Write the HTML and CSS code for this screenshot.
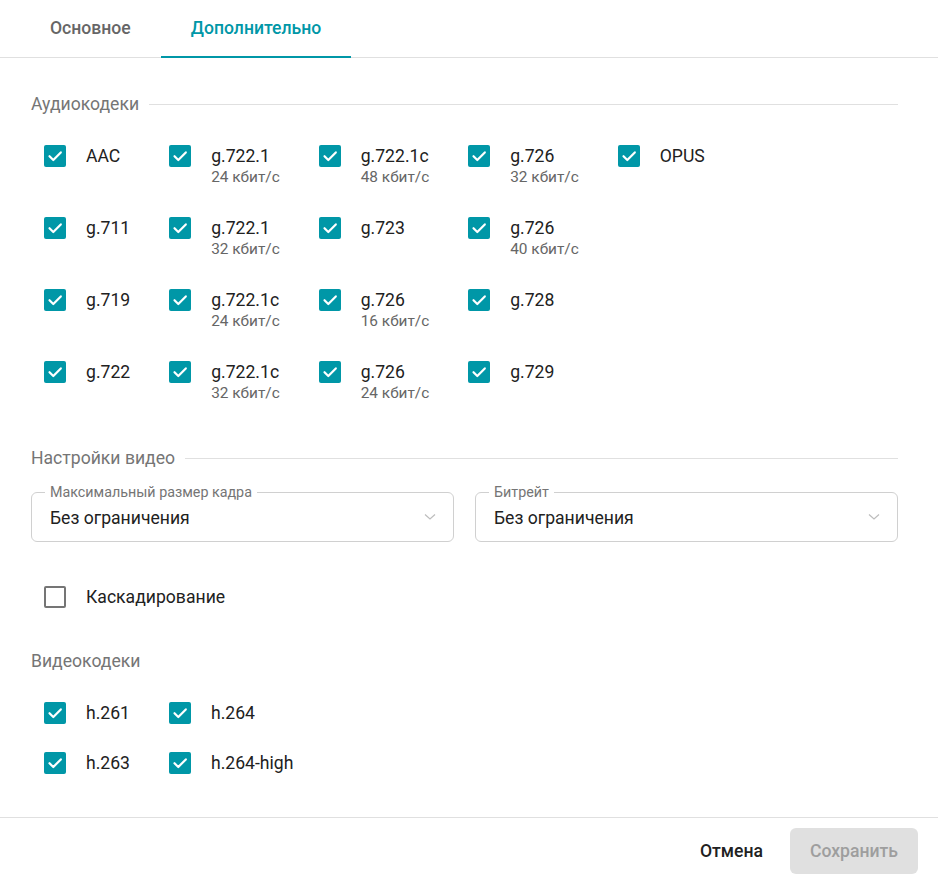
FILE: index.html
```html
<!DOCTYPE html>
<html lang="ru">
<head>
<meta charset="utf-8">
<title>Настройки</title>
<link rel="stylesheet" href="styles.css">
</head>
<body>
<div class="dialog">
  <div class="tabs">
    <div class="tab">Основное</div>
    <div class="tab active">Дополнительно</div>
  </div>

  <div class="content">
    <div class="section-title"><span>Аудиокодеки</span><i class="rule"></i></div>

    <div class="audio-grid">
      <label class="item"><span class="cb on"><svg viewBox="0 0 22 22"><path d="M5.5 11.2 L9.3 15 L16.8 7.4"/></svg></span><span class="txt"><span class="name">AAC</span></span></label>
      <label class="item"><span class="cb on"><svg viewBox="0 0 22 22"><path d="M5.5 11.2 L9.3 15 L16.8 7.4"/></svg></span><span class="txt"><span class="name">g.711</span></span></label>
      <label class="item"><span class="cb on"><svg viewBox="0 0 22 22"><path d="M5.5 11.2 L9.3 15 L16.8 7.4"/></svg></span><span class="txt"><span class="name">g.719</span></span></label>
      <label class="item"><span class="cb on"><svg viewBox="0 0 22 22"><path d="M5.5 11.2 L9.3 15 L16.8 7.4"/></svg></span><span class="txt"><span class="name">g.722</span></span></label>

      <label class="item"><span class="cb on"><svg viewBox="0 0 22 22"><path d="M5.5 11.2 L9.3 15 L16.8 7.4"/></svg></span><span class="txt"><span class="name">g.722.1</span><span class="sub">24 кбит/с</span></span></label>
      <label class="item"><span class="cb on"><svg viewBox="0 0 22 22"><path d="M5.5 11.2 L9.3 15 L16.8 7.4"/></svg></span><span class="txt"><span class="name">g.722.1</span><span class="sub">32 кбит/с</span></span></label>
      <label class="item"><span class="cb on"><svg viewBox="0 0 22 22"><path d="M5.5 11.2 L9.3 15 L16.8 7.4"/></svg></span><span class="txt"><span class="name">g.722.1c</span><span class="sub">24 кбит/с</span></span></label>
      <label class="item"><span class="cb on"><svg viewBox="0 0 22 22"><path d="M5.5 11.2 L9.3 15 L16.8 7.4"/></svg></span><span class="txt"><span class="name">g.722.1c</span><span class="sub">32 кбит/с</span></span></label>

      <label class="item"><span class="cb on"><svg viewBox="0 0 22 22"><path d="M5.5 11.2 L9.3 15 L16.8 7.4"/></svg></span><span class="txt"><span class="name">g.722.1c</span><span class="sub">48 кбит/с</span></span></label>
      <label class="item"><span class="cb on"><svg viewBox="0 0 22 22"><path d="M5.5 11.2 L9.3 15 L16.8 7.4"/></svg></span><span class="txt"><span class="name">g.723</span></span></label>
      <label class="item"><span class="cb on"><svg viewBox="0 0 22 22"><path d="M5.5 11.2 L9.3 15 L16.8 7.4"/></svg></span><span class="txt"><span class="name">g.726</span><span class="sub">16 кбит/с</span></span></label>
      <label class="item"><span class="cb on"><svg viewBox="0 0 22 22"><path d="M5.5 11.2 L9.3 15 L16.8 7.4"/></svg></span><span class="txt"><span class="name">g.726</span><span class="sub">24 кбит/с</span></span></label>

      <label class="item"><span class="cb on"><svg viewBox="0 0 22 22"><path d="M5.5 11.2 L9.3 15 L16.8 7.4"/></svg></span><span class="txt"><span class="name">g.726</span><span class="sub">32 кбит/с</span></span></label>
      <label class="item"><span class="cb on"><svg viewBox="0 0 22 22"><path d="M5.5 11.2 L9.3 15 L16.8 7.4"/></svg></span><span class="txt"><span class="name">g.726</span><span class="sub">40 кбит/с</span></span></label>
      <label class="item"><span class="cb on"><svg viewBox="0 0 22 22"><path d="M5.5 11.2 L9.3 15 L16.8 7.4"/></svg></span><span class="txt"><span class="name">g.728</span></span></label>
      <label class="item"><span class="cb on"><svg viewBox="0 0 22 22"><path d="M5.5 11.2 L9.3 15 L16.8 7.4"/></svg></span><span class="txt"><span class="name">g.729</span></span></label>

      <label class="item"><span class="cb on"><svg viewBox="0 0 22 22"><path d="M5.5 11.2 L9.3 15 L16.8 7.4"/></svg></span><span class="txt"><span class="name">OPUS</span></span></label>
    </div>

    <div class="section-title video-title"><span>Настройки видео</span><i class="rule"></i></div>

    <div class="selects">
      <div class="select">
        <span class="select-label">Максимальный размер кадра</span>
        <span class="select-value">Без ограничения</span>
        <svg class="chev" viewBox="0 0 12 8"><path d="M1 1.5 L6 6 L11 1.5"/></svg>
      </div>
      <div class="select">
        <span class="select-label">Битрейт</span>
        <span class="select-value">Без ограничения</span>
        <svg class="chev" viewBox="0 0 12 8"><path d="M1 1.5 L6 6 L11 1.5"/></svg>
      </div>
    </div>

    <label class="item cascade"><span class="cb off"></span><span class="txt"><span class="name">Каскадирование</span></span></label>

    <div class="plain-title">Видеокодеки</div>

    <div class="video-grid">
      <label class="item"><span class="cb on"><svg viewBox="0 0 22 22"><path d="M5.5 11.2 L9.3 15 L16.8 7.4"/></svg></span><span class="txt"><span class="name">h.261</span></span></label>
      <label class="item"><span class="cb on"><svg viewBox="0 0 22 22"><path d="M5.5 11.2 L9.3 15 L16.8 7.4"/></svg></span><span class="txt"><span class="name">h.263</span></span></label>
      <label class="item"><span class="cb on"><svg viewBox="0 0 22 22"><path d="M5.5 11.2 L9.3 15 L16.8 7.4"/></svg></span><span class="txt"><span class="name">h.264</span></span></label>
      <label class="item"><span class="cb on"><svg viewBox="0 0 22 22"><path d="M5.5 11.2 L9.3 15 L16.8 7.4"/></svg></span><span class="txt"><span class="name">h.264-high</span></span></label>
    </div>
  </div>

  <div class="footer">
    <button class="btn btn-text">Отмена</button>
    <button class="btn btn-save" disabled>Сохранить</button>
  </div>
</div>
</body>
</html>
```

FILE: styles.css
```css
* { box-sizing: border-box; }

html, body {
  margin: 0;
  padding: 0;
  background: #ffffff;
}

body {
  font-family: Roboto, "Noto Sans", "Liberation Sans", sans-serif;
  color: #212121;
  font-size: 17.6px;
}

.dialog {
  width: 938px;
  height: 883px;
  display: flex;
  flex-direction: column;
}

/* Tabs */
.tabs {
  display: flex;
  gap: 0;
  padding-left: 20px;
  height: 58px;
  border-bottom: 1px solid #e0e0e0;
}

.tab {
  padding: 0 30px;
  height: 58px;
  line-height: 56px;
  font-size: 17.6px;
  font-weight: 500;
  color: #666666;
}

.tab.active {
  color: #0097a7;
  border-bottom: 2px solid #0097a7;
  margin-bottom: -1px;
}

/* Content */
.content {
  flex: 1;
  padding: 35px 40px 0 31px;
}

.section-title {
  display: flex;
  align-items: center;
  gap: 10px;
  font-size: 17.6px;
  line-height: 22px;
  color: #757575;
}

.section-title .rule {
  flex: 1;
  height: 1px;
  background: #e0e0e0;
}

.audio-grid {
  display: grid;
  grid-auto-flow: column;
  grid-template-rows: repeat(4, 42px);
  grid-auto-columns: max-content;
  justify-content: start;
  column-gap: 39px;
  row-gap: 30px;
  margin-top: 30px;
  padding-left: 13px;
}

.item {
  display: flex;
  align-items: flex-start;
}

.cb {
  width: 22px;
  height: 22px;
  border-radius: 2px;
  flex: none;
  margin-right: 20px;
  display: flex;
}

.cb.on {
  background: #0097a7;
}

.cb.off {
  border: 2px solid #757575;
  background: #ffffff;
}

.cb svg {
  width: 22px;
  height: 22px;
}

.cb svg path {
  fill: none;
  stroke: #ffffff;
  stroke-width: 2.2;
  stroke-linecap: round;
  stroke-linejoin: round;
}

.txt {
  display: flex;
  flex-direction: column;
}

.name {
  font-size: 17.6px;
  line-height: 22px;
  color: #212121;
}

.sub {
  font-size: 15.4px;
  line-height: 20px;
  color: #666666;
}

.video-title {
  margin-top: 44px;
}

/* Selects */
.selects {
  display: grid;
  grid-template-columns: 1fr 1fr;
  gap: 21px;
  margin-top: 23px;
}

.select {
  position: relative;
  height: 50px;
  border: 1px solid #d0d0d0;
  border-radius: 6px;
  display: flex;
  align-items: center;
  padding: 0 17px 0 18px;
}

.select-label {
  position: absolute;
  top: -9px;
  left: 13px;
  padding: 0 5px;
  background: #ffffff;
  font-size: 14.3px;
  line-height: 16px;
  color: #757575;
}

.select-value {
  flex: 1;
  font-size: 17.6px;
  line-height: 22px;
  color: #212121;
  padding-top: 2px;
}

.chev {
  width: 12px;
  height: 8px;
  flex: none;
}

.chev path {
  fill: none;
  stroke: #bdbdbd;
  stroke-width: 1.2;
}

.cascade {
  margin-top: 44px;
  padding-left: 13px;
  align-items: center;
}

.plain-title {
  margin-top: 42px;
  font-size: 17.6px;
  line-height: 22px;
  color: #757575;
}

.video-grid {
  display: grid;
  grid-auto-flow: column;
  grid-template-rows: repeat(2, 22px);
  grid-auto-columns: max-content;
  justify-content: start;
  column-gap: 39px;
  row-gap: 28px;
  margin-top: 30px;
  padding-left: 13px;
}

.video-grid .item {
  align-items: center;
  height: 22px;
}

/* Footer */
.footer {
  border-top: 1px solid #e0e0e0;
  height: 66px;
  padding: 10px 20px 0 0;
  display: flex;
  justify-content: flex-end;
  align-items: flex-start;
  gap: 11px;
}

.btn {
  font-family: inherit;
  font-size: 17.6px;
  font-weight: 500;
  height: 46px;
  border: none;
  border-radius: 6px;
  padding: 0 20px;
  background: transparent;
}

.btn-text {
  color: #212121;
  padding: 0 16px;
}

.btn-save {
  background: #e0e0e0;
  color: #9e9e9e;
  width: 128px;
  padding: 0;
}
```
